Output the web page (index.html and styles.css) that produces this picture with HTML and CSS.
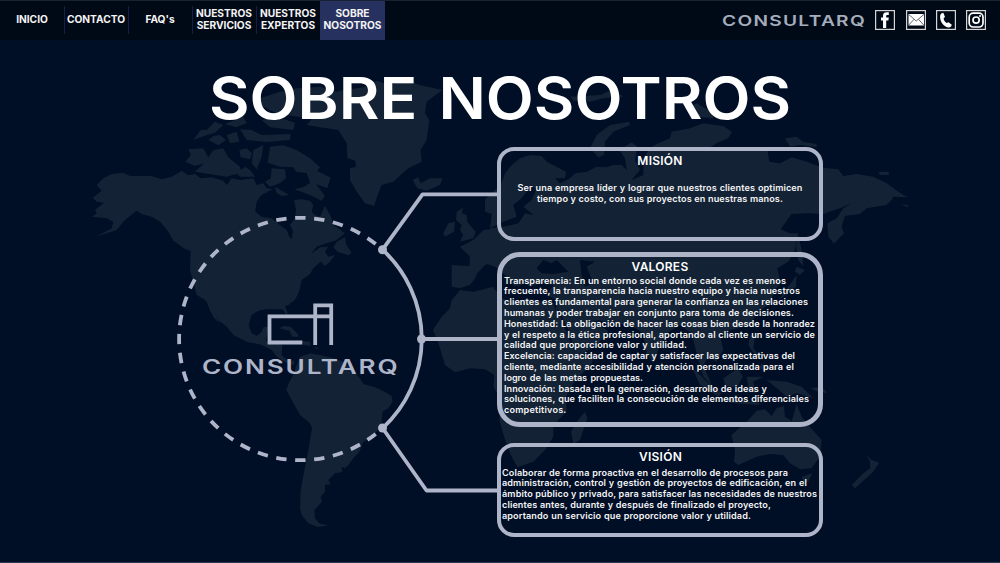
FILE: index.html
```html
<!DOCTYPE html>
<html lang="es">
<head>
<meta charset="utf-8">
<title>Consultarq - Sobre nosotros</title>
<link rel="stylesheet" href="styles.css">
</head>
<body>
<header class="topbar">
  <nav class="nav">
    <a class="nav-item">INICIO</a>
    <a class="nav-item">CONTACTO</a>
    <a class="nav-item">FAQ's</a>
    <a class="nav-item">NUESTROS<br>SERVICIOS</a>
    <a class="nav-item">NUESTROS<br>EXPERTOS</a>
    <a class="nav-item active">SOBRE<br>NOSOTROS</a>
  </nav>
  <svg class="brand" width="146" height="20" viewBox="0 0 146 20">
    <text x="1" y="15.500" textLength="144" lengthAdjust="spacingAndGlyphs">CONSULTARQ</text>
  </svg>
  <div class="social">
    <svg width="20" height="20" viewBox="0 0 20 20"><rect class="frame" x=".6" y=".6" width="18.8" height="18.8"/><path fill="#fff" d="M8 18V10.500H6V7.500H8V5.800C8 3.400 9.400 2.300 11.600 2.300H13.800V5H12.500C11.500 5 11.200 5.500 11.200 6.300V7.500H13.800L13.400 10.500H11.200V18Z"/></svg>
    <svg width="20" height="20" viewBox="0 0 20 20"><rect class="frame" x=".6" y=".6" width="18.8" height="18.8"/><rect x="2.500" y="4" width="15.500" height="11.500" fill="#fff"/><path d="M2.500 4.300L10.200 11 18 4.300M2.500 15.300L8 9.300M18 15.300L12.500 9.300" fill="none" stroke="#39424f" stroke-width=".8"/></svg>
    <svg width="20" height="20" viewBox="0 0 20 20"><rect class="frame" x=".6" y=".6" width="18.8" height="18.8"/><path fill="#fff" d="M5.200 3.500L7.300 2.700 9 6.900 7.600 8.300C7.800 10.400 8.900 12 10.600 13L12.500 12.200 15.800 14.700 15.100 16.500C13 18.300 9.800 17.300 7.300 14.800 4.500 12 2.900 6 5.200 3.500Z"/></svg>
    <svg width="20" height="20" viewBox="0 0 20 20"><rect class="frame" x=".6" y=".6" width="18.8" height="18.8"/><g fill="none" stroke="#fff"><rect x="3.200" y="3.200" width="13.800" height="13.800" rx="4" stroke-width="1.700"/><circle cx="10.100" cy="10.100" r="3.100" stroke-width="1.700"/></g><circle cx="14" cy="6" r="1" fill="#fff"/></svg>
  </div>
</header>

<main class="page">
  <svg class="backdrop" width="1000" height="563" viewBox="0 0 1000 563">
    <g class="land" transform="translate(80 70) scale(.33333)">
      <!-- North and Central America -->
      <path d="M70 325L95 312 130 308 150 318 215 318 245 328 275 320 305 302 325 316 345 312 362 325 395 322 430 332 440 345 455 325 480 330 520 325 530 345 550 340 560 355 578 358 545 375 530 395 526 425 545 440 575 445 600 465 620 480 628 500 636 508 638 480 630 465 645 445 648 420 642 390 665 388 690 392 700 405 695 425 705 435 720 440 735 407 755 445 760 465 795 490 770 510 740 520 710 530 693 552 720 532 745 530 735 545 745 560 765 555 750 575 735 588 722 575 700 595 690 612 665 630 660 655 655 670 645 690 625 705 615 708 622 725 622 739 608 718 590 718 560 718 535 722 515 735 506 765 515 790 530 797 545 785 550 772 572 768 562 790 558 812 585 820 607 825 605 855 620 870 645 872 640 885 615 877 590 860 575 840 545 825 500 815 460 795 440 770 415 750 400 725 375 690 350 675 345 655 330 600 332 543 310 535 280 510 265 485 240 455 215 440 185 432 170 422 135 450 110 480 48 500 95 475 100 455 80 445 36 440 50 430 45 420 72 398 50 395 38 383 65 362 50 345Z"/>
      <path d="M380 695L395 705 408 738 421 762 402 744 388 718ZM770 515L795 502 798 522 815 548 806 556 772 545 760 532ZM598 775L610 768 632 770 650 788 658 800 636 800 628 782ZM662 812L690 815 692 827 670 825ZM700 830L715 833 710 838ZM265 485L285 495 295 512 325 525 334 543 310 530 280 512Z"/>
      <!-- Canadian Arctic -->
      <path d="M325 238L370 235 385 262 400 240 430 235 445 262 480 290 485 308 440 320 390 313 345 305 372 280 345 288 316 275 332 255ZM570 230L610 226 650 240 690 265 720 292 712 303 752 323 742 355 708 342 735 378 725 392 690 375 643 358 672 350 690 338 680 310 648 305 640 292 600 290 563 278ZM575 295L615 298 618 325 600 340 570 350 555 335 572 325ZM520 240L550 225 545 262 530 298 515 280ZM478 240L500 235 516 250 510 268 482 262ZM470 310L495 290 510 300 525 320 480 320ZM340 210L362 180 380 180 405 155 430 165 405 188 372 198ZM385 210L400 198 420 195 438 210 415 226ZM435 162L490 140 500 160 468 172ZM480 178L515 180 545 195 632 192 630 210 560 216 500 210ZM545 150L590 140 645 158 640 180 570 172ZM440 195L470 185 478 215 450 220ZM585 350L628 375 605 378 590 370ZM540 85L600 65 650 55 720 50 770 65 730 85 710 130 680 145 590 130 545 108Z"/>
      <!-- Greenland, Iceland, British Isles -->
      <path d="M680 165L710 130 720 80 780 62 850 52 890 32 930 45 975 30 1020 45 1087 60 1060 80 1040 95 1035 130 1048 150 1040 210 1022 240 1025 275 985 295 940 335 905 345 895 370 882 408 855 400 830 365 810 330 810 295 828 290 826 272 802 265 800 220 775 180 720 172Z"/>
      <path d="M998 330L1015 322 1022 340 1050 325 1088 325 1080 345 1040 362 1012 355ZM1130 425L1150 412 1145 430 1160 435 1162 455 1187 485 1180 505 1140 515 1150 495 1140 480 1145 465 1128 450ZM1105 460L1125 455 1122 485 1095 500 1090 490Z"/>
      <!-- South America -->
      <path d="M650 885L660 860 690 850 720 855 760 865 790 875 815 900 840 925 850 942 885 952 915 965 935 978 938 995 925 1015 908 1025 905 1055 890 1085 870 1105 850 1115 838 1145 820 1165 805 1185 795 1195 785 1190 788 1205 765 1210 745 1230 752 1243 735 1245 735 1265 722 1280 726 1295 703 1320 705 1345 718 1360 744 1367 712 1371 685 1360 665 1335 660 1315 662 1260 675 1190 685 1140 696 1075 690 1060 660 1035 640 1000 619 960 628 935 640 915Z"/>
      <!-- Europe and Asia -->
      <path d="M1115 585L1168 588 1170 560 1140 530 1180 510 1210 480 1230 478 1235 432 1215 425 1215 388 1262 345 1275 310 1295 285 1320 265 1350 255 1385 258 1400 275 1430 290 1458 305 1455 325 1425 325 1440 340 1470 325 1485 310 1520 305 1550 290 1580 292 1600 285 1625 285 1640 300 1635 265 1618 240 1655 217 1672 230 1665 270 1680 300 1655 330 1690 315 1690 265 1710 235 1730 222 1770 205 1775 185 1830 175 1870 160 1930 168 1956 185 1945 205 1910 220 1890 232 1950 240 2030 243 2062 240 2068 275 2100 280 2135 262 2180 275 2230 293 2275 298 2290 318 2330 312 2380 320 2420 340 2455 365 2482 382 2440 380 2435 390 2420 405 2360 415 2340 432 2295 438 2285 470 2292 490 2262 521 2245 500 2242 460 2270 445 2290 415 2315 400 2280 415 2230 432 2185 430 2135 432 2102 478 2130 490 2155 490 2145 540 2125 575 2092 595 2102 640 2085 660 2070 700 2030 730 2010 765 1950 780 1920 795 1930 840 1910 875 1885 860 1870 885 1895 945 1870 920 1850 850 1835 790 1800 765 1760 790 1735 840 1720 880 1700 850 1690 790 1650 765 1580 755 1550 750 1585 785 1545 830 1480 865 1460 820 1425 735 1430 690 1400 675 1420 645 1380 640 1350 650 1330 635 1315 660 1295 640 1270 610 1245 590 1220 582 1195 612 1170 645 1140 655 1115 650Z"/>
      <!-- Africa and Madagascar -->
      <path d="M1140 660L1180 665 1240 650 1260 655 1265 685 1310 700 1340 685 1420 700 1440 770 1475 850 1490 860 1545 850 1535 880 1480 940 1458 980 1460 1025 1420 1065 1420 1100 1395 1140 1360 1175 1312 1192 1295 1160 1275 1110 1258 1050 1262 990 1240 950 1243 915 1215 898 1170 895 1125 907 1095 885 1075 820 1059 780 1085 740 1110 715 1115 690ZM1515 1025L1522 1045 1500 1110 1480 1122 1473 1085 1490 1055Z"/>
      <!-- Oceania and the archipelagos -->
      <path d="M1954 1095L2000 1055 2030 1022 2055 1018 2075 1038 2090 1015 2112 1008 2115 1040 2135 1052 2150 1002 2165 1040 2180 1060 2225 1110 2220 1160 2195 1195 2160 1198 2130 1180 2110 1155 2070 1152 2030 1160 1975 1185 1962 1175 1965 1140ZM2165 1220L2197 1210 2185 1235 2172 1238ZM2358 1154L2375 1170 2398 1178 2380 1205 2325 1255 2315 1245 2350 1210 2370 1195 2370 1175ZM1835 890L1875 930 1925 970 1915 980 1860 945ZM1930 925L1975 895 1988 920 1970 955 1935 945ZM2000 920L2050 920 2020 935 2030 970 2008 965ZM2060 930L2120 935 2165 950 2200 985 2150 970 2120 980 2085 950ZM2190 955L2225 950 2242 970 2215 965ZM1930 985L1990 992 2040 998 2035 1005 1950 998ZM2010 795L2025 800 2020 835 2048 870 2030 865 2005 825ZM2045 880L2060 900 2035 895Z"/>
      <!-- Japan, Arctic Russia -->
      <path d="M2155 495L2165 540 2170 590 2155 570 2148 530ZM2150 590L2175 600 2160 615 2145 605ZM2150 615L2148 650 2110 680 2095 690 2125 650ZM1648 155L1650 165 1600 185 1575 215 1572 255 1555 262 1530 235 1550 195 1590 165ZM2115 205L2150 200 2170 215 2210 222 2210 232 2160 225 2130 230ZM2395 306L2425 305 2428 314 2400 315ZM2460 402L2485 406 2483 412ZM1470 80L1560 75 1600 58 1630 80 1570 85 1530 95 1480 92ZM1820 115L1850 100 1895 125 1900 145 1850 140Z"/>
      <!-- Inland seas -->
      <g class="water">
        <path d="M1230 475L1270 470 1315 460 1335 430 1360 435 1330 410 1355 390 1370 355 1350 350 1325 385 1300 405 1310 440 1270 455ZM1190 612L1215 585 1235 605 1240 625 1265 620 1240 595 1265 600 1290 650 1330 645 1400 660 1390 685 1265 685 1235 645 1185 655ZM1370 595L1390 570 1415 580 1430 570 1465 605 1420 612 1385 610ZM1500 570L1545 575 1520 590 1540 640 1515 650 1505 615ZM1540 750L1570 775 1620 780 1580 765ZM1426 700L1460 790 1485 850 1470 790Z"/>
        <path d="M652 315L665 320 660 335 650 330ZM808 275L822 278 820 292 806 288Z"/>
      </g>
    </g>
    <g class="wires">
      <path d="M375.700 433.900A121.200 121.200 0 1 1 375.700 244.100" pathLength="256.900" stroke-dasharray="4.900 4.100"/>
      <path d="M382.500 249.700A121.200 121.200 0 0 1 382.500 428.300"/>
      <path d="M382.500 249.700L422.500 194.300H499M421.500 339H499M382.500 428L426.500 490.500H499"/>
    </g>
    <g class="nodes"><circle cx="382.500" cy="249.700" r="4.500"/><circle cx="421.500" cy="339" r="4.500"/><circle cx="382.500" cy="428" r="4.500"/></g>
    <path class="mark" d="M302.300 342.500H269.500V316.300H331.300M315.200 345V305.300H331.200V345"/>
    <text class="wordmark" x="202" y="373.600" textLength="197.500" lengthAdjust="spacingAndGlyphs">CONSULTARQ</text>
  </svg>

  <h1 class="title"><svg width="600" height="90" viewBox="0 0 600 90"><text x="9" y="65" textLength="582" lengthAdjust="spacingAndGlyphs">SOBRE NOSOTROS</text></svg></h1>

  <div class="cards">
    <section class="card mision">
      <h2>MISIÓN</h2>
      <div class="copy">
        <span>Ser una empresa líder y lograr que nuestros clientes optimicen</span>
        <span>tiempo y costo, con sus proyectos en nuestras manos.</span>
      </div>
    </section>
    <section class="card valores">
      <h2>VALORES</h2>
      <div class="copy">
        <span>Transparencia: En un entorno social donde cada vez es menos</span>
        <span>frecuente, la transparencia hacia nuestro equipo y hacia nuestros</span>
        <span>clientes es fundamental para generar la confianza en las relaciones</span>
        <span>humanas y poder trabajar en conjunto para toma de decisiones.</span>
        <span>Honestidad: La obligación de hacer las cosas bien desde la honradez</span>
        <span>y el respeto a la ética profesional, aportando al cliente un servicio de</span>
        <span>calidad que proporcione valor y utilidad.</span>
        <span>Excelencia: capacidad de captar y satisfacer las expectativas del</span>
        <span>cliente, mediante accesibilidad y atención personalizada para el</span>
        <span>logro de las metas propuestas.</span>
        <span>Innovación: basada en la generación, desarrollo de ideas y</span>
        <span>soluciones, que faciliten la consecución de elementos diferenciales</span>
        <span>competitivos.</span>
      </div>
    </section>
    <section class="card vision">
      <h2>VISIÓN</h2>
      <div class="copy">
        <span>Colaborar de forma proactiva en el desarrollo de procesos para</span>
        <span>administración, control y gestión de proyectos de edificación, en el</span>
        <span>ámbito público y privado, para satisfacer las necesidades de nuestros</span>
        <span>clientes antes, durante y después de finalizado el proyecto,</span>
        <span>aportando un servicio que proporcione valor y utilidad.</span>
      </div>
    </section>
  </div>
</main>
</body>
</html>
```

FILE: styles.css
```css
* { box-sizing: border-box; }
body {
  margin: 0;
  width: 1000px;
  height: 563px;
  overflow: hidden;
  background: #000e26;
  color: #f4f4f4;
  font-family: Inter, "Open Sans", sans-serif;
  display: flex;
  flex-direction: column;
}
.topbar {
  position: relative;
  z-index: 1;
  flex: none;
  height: 40px;
  display: flex;
  align-items: center;
  background: #000916;
  border-top: 1px solid #18232f;
}
.nav { display: flex; height: 39px; margin-right: auto; }
.nav-item {
  position: relative;
  width: 64px;
  padding-bottom: 3px;
  display: flex;
  align-items: center;
  justify-content: center;
  text-align: center;
  font-size: 10.2px;
  font-weight: 700;
  line-height: 12px;
  white-space: nowrap;
}
.nav-item:nth-child(-n+4)::after {
  content: "";
  position: absolute;
  right: -1px;
  top: 5px;
  width: 1px;
  height: 28px;
  background: #141f4b;
}
.nav-item.active { width: 65px; background: #27315f; }
.brand { margin: 0 8px 2px 0; }
.brand text { font-size: 14.800px; font-weight: 600; letter-spacing: 1px; fill: #a5adbd; }
.social { display: flex; gap: 10.300px; margin: 0 13.700px 2px 0; }
.frame { fill: none; stroke: #d5d5d5; stroke-width: 1.2; }

.page { flex: 1; border-bottom: 1px solid #2a3850; }
.backdrop { position: absolute; left: 0; top: 0; }
.land { fill: #132235; }
.water { fill: #000e26; }
.wires { fill: none; stroke: #afb5c9; stroke-width: 3.800; stroke-linejoin: round; }
.nodes { fill: #afb5c9; }
.mark { fill: none; stroke: #afb5c9; stroke-width: 3.800; }
.wordmark { font-size: 19.500px; font-weight: 600; letter-spacing: 1.400px; fill: #afb5c9; }

.title { position: relative; margin: 14px 0 0 200px; height: 93px; }
.title svg { display: block; }
.title text { font-size: 57.500px; font-weight: 600; word-spacing: 5px; fill: #fff; }

.cards {
  position: relative;
  width: 326px;
  margin-left: 497px;
  display: flex;
  flex-direction: column;
}
.card { border: 4px solid #afb5c9; border-radius: 17px; height: 94px; }
.card h2 {
  margin: 0;
  font-size: 12px;
  line-height: 14px;
  font-weight: 600;
  letter-spacing: .25px;
  text-align: center;
  color: #fff;
}
.copy {
  display: flex;
  flex-direction: column;
  font-size: 9.100px;
  font-weight: 600;
  letter-spacing: .11px;
  line-height: 10.810px;
}
.copy span { white-space: nowrap; text-align: justify; text-align-last: justify; }

.mision { padding-top: 3px; }
.mision .copy { align-items: center; margin-top: 15px; }
.mision span:nth-child(1) { width: 285px; }
.mision span:nth-child(2) { width: 246px; }

.valores { height: 175px; margin-top: 11px; border-width: 5px; border-radius: 23px; padding: 3px 0 0 2px; }
.valores h2 { margin-left: -2px; }
.valores .copy { margin-top: 1.500px; }
.valores span:nth-child(1) { width: 282px; }
.valores span:nth-child(2) { width: 296px; }
.valores span:nth-child(3) { width: 304px; }
.valores span:nth-child(4) { width: 290px; }
.valores span:nth-child(5) { width: 311px; letter-spacing: .08px; }
.valores span:nth-child(6) { width: 311px; }
.valores span:nth-child(7) { width: 183px; }
.valores span:nth-child(8) { width: 291px; letter-spacing: .03px; }
.valores span:nth-child(9) { width: 290px; letter-spacing: .08px; }
.valores span:nth-child(10) { width: 139px; letter-spacing: 0; }
.valores span:nth-child(11) { width: 263px; letter-spacing: .03px; }
.valores span:nth-child(12) { width: 305px; letter-spacing: .08px; }
.valores span:nth-child(13) { width: 62px; letter-spacing: .2px; }

.vision { margin-top: 16px; padding: 3px 0 0 1px; }
.vision .copy { margin-top: 3.500px; }
.vision span:nth-child(1) { width: 286px; }
.vision span:nth-child(2) { width: 305px; }
.vision span:nth-child(3) { width: 315px; }
.vision span:nth-child(4) { width: 269px; }
.vision span:nth-child(5) { width: 249px; }
```
